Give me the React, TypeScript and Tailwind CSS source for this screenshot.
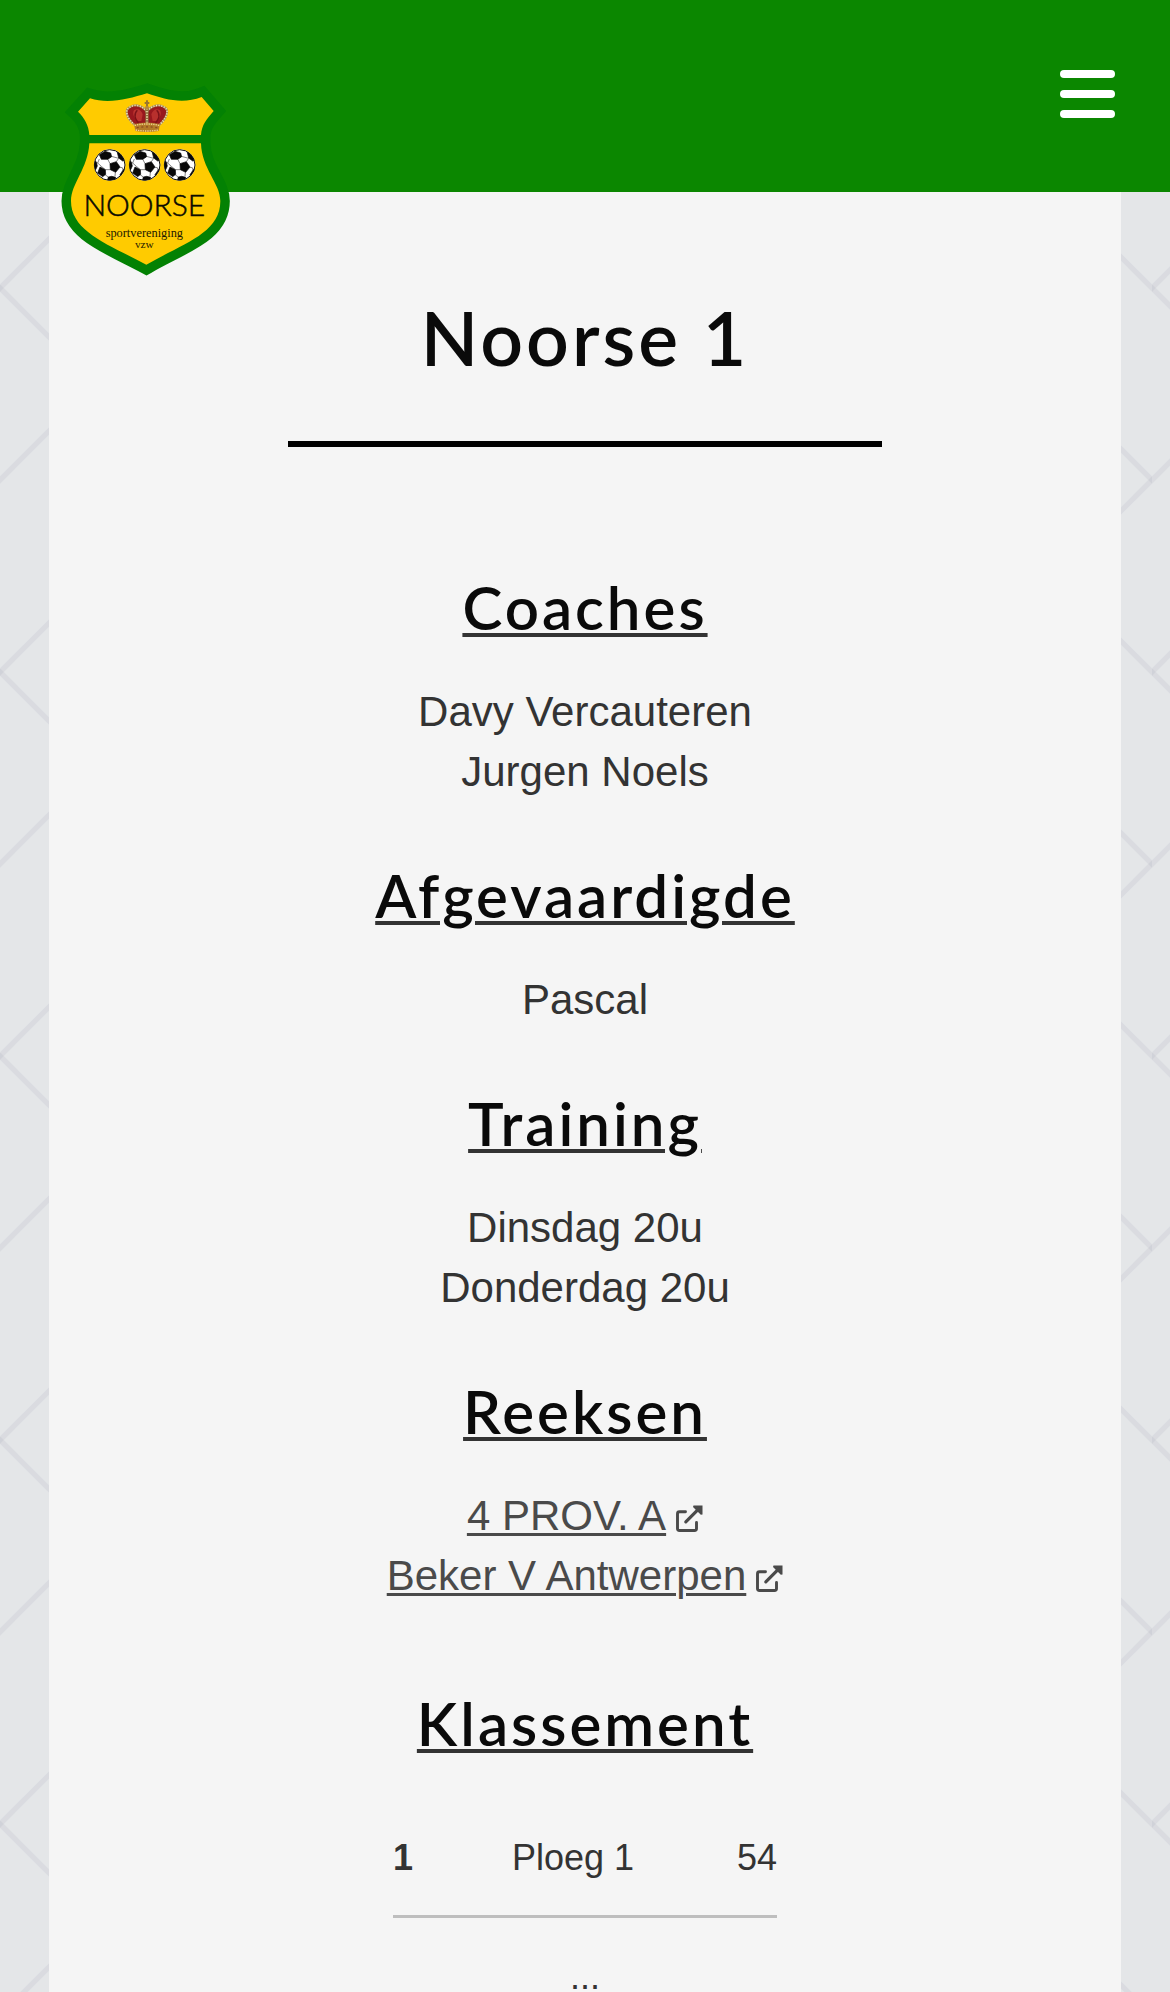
import type { ReactNode } from "react";

function Backdrop() {
  return (
    <svg className="absolute inset-0 -z-10 h-full w-full" aria-hidden="true">
      <defs>
        <pattern id="weave" width="384" height="384" patternUnits="userSpaceOnUse">
          <g stroke="#a5a7b4" strokeOpacity="0.17" strokeWidth="5.2" fill="none">
            <path d="M-20 116L96 0" />
            <path d="M288 192L404 76" />
            <path d="M288 0L404 116" />
            <path d="M-20 308L96 192" />
            <path d="M-20 268L96 384" />
            <path d="M288 192L404 308" />
          </g>
        </pattern>
      </defs>
      <rect width="100%" height="100%" fill="#e4e6e8" />
      <rect width="100%" height="100%" fill="url(#weave)" />
    </svg>
  );
}

function Ball({ x }: { x: number }) {
  return (
    <g transform={`translate(${x} 270)`}>
      <circle r="47" fill="#fff" />
      <g clipPath="url(#ballClip)">
        <path
          d="M1 -4L-6 -18M20 -10L27 -20M30 7L38 8M17 22L16 34M2 14L-13 14M-6 -18L5 -26M5 -26L27 -20M-31 -18L-36 -6M-36 -6L-25 4M-36 -6L-47 -2M-13 14L-25 4M-14 29L-4 36M38 8L41 18"
          fill="none"
          stroke="#444"
          strokeWidth="2"
        />
        <g fill="#080808" stroke="#080808" strokeWidth="2" strokeLinejoin="round">
          <path d="M1 -4L20 -10L31 6L18 22L2 14Z" />
          <path d="M-31 -31L-14 -41L3 -36L6 -25L-6 -17L-25 -17Z" />
          <path d="M22 -41L27 -21L39 -12L47 -15L38 -36Z" />
          <path d="M-47 -16L-40 -9L-37 3L-42 14L-50 10Z" />
          <path d="M-29 6L-13 14L-12 28L-21 35L-36 24Z" />
          <path d="M-4 36L6 34L18 37L16 48L-7 48Z" />
          <path d="M39 17L47 8L46 24L33 36L31 29Z" />
        </g>
      </g>
      <circle r="46" fill="none" stroke="#111" strokeWidth="3" />
    </g>
  );
}

function Crown() {
  return (
    <g>
      <path d="M254 150C232 130 222 104 240 96C256 86 280 92 288 106H294C304 92 328 86 344 96C360 104 350 130 328 150Z" fill="#98181e" />
      <path d="M252 106C262 98 274 104 278 118L274 138L264 138C252 130 246 116 252 106Z" fill="#bb3430" />
      <path d="M330 106C320 98 308 104 304 118L308 138L318 138C330 130 336 116 330 106Z" fill="#b8302d" />
      <path d="M268 148C254 130 250 118 262 106M314 148C328 130 332 118 320 106" fill="none" stroke="#7c1218" strokeWidth="4" />
      <path d="M254 150C230 130 222 104 240 96C256 86 282 92 290 112C300 92 326 86 342 96C360 104 350 130 328 150" fill="none" stroke="#a98a55" strokeWidth="6" />
      <path d="M254 150C230 130 222 104 240 96C256 86 282 92 290 112C300 92 326 86 342 96C360 104 350 130 328 150" fill="none" stroke="#f1e4c4" strokeWidth="5" strokeDasharray="3 5" />
      <path d="M291 98V148" stroke="#8c6a3a" strokeWidth="10" />
      <path d="M291 100V148" stroke="#ecd9a8" strokeWidth="5" strokeDasharray="4 4" />
      <path d="M291 76V98M284 84H298" stroke="#9a7630" strokeWidth="6" />
      <circle cx="291" cy="98" r="6" fill="#b5873c" />
      <path d="M252 147Q291 138 330 147L326 168Q291 174 256 168Z" fill="#b37b28" />
      <path d="M254 151Q291 143 328 151M257 165Q291 171 325 165" fill="none" stroke="#f0d691" strokeWidth="4" strokeDasharray="4 3" />
      <path d="M260 158Q291 153 322 158" fill="none" stroke="#8a4a20" strokeWidth="4" strokeDasharray="6 8" />
    </g>
  );
}

const SHIELD =
  "M120 70C175 88 235 72 291 55C345 74 400 88 455 66L491 108C470 132 455 150 453 180V205C455 282 511 325 511 378C511 475 400 505 289 569C175 508 63 470 63 378C63 325 114 282 118 205V180C116 150 103 128 84 110Z";

function Logo() {
  return (
    <svg viewBox="0 0 570 630" className="h-[210px] w-[190px]" role="img" aria-label="Noorse sportvereniging vzw">
      <defs>
        <clipPath id="ballClip">
          <circle r="46" />
        </clipPath>
      </defs>
      <path d={SHIELD} fill="#ffcb00" stroke="#038103" strokeWidth="57" />
      <path d={SHIELD} fill="#ffcb00" />
      <path d="M105 180H466V205H105Z" fill="#038103" />
      <Crown />
      <Ball x={179} />
      <Ball x={284} />
      <Ball x={389} />
      <text
        x="283"
        y="424"
        textAnchor="middle"
        fontSize="90"
        fill="#0a0a00"
        stroke="#0a0a00"
        strokeWidth="1.500"
        className="font-[Lato,sans-serif] font-light"
      >
        NOORSE
      </text>
      <g textAnchor="middle" fill="#1c1800" className="font-['Liberation_Serif',serif]">
        <text x="283" y="487" fontSize="37">
          sportvereniging
        </text>
        <text x="283" y="519" fontSize="34">
          vzw
        </text>
      </g>
    </svg>
  );
}

function ExternalIcon() {
  return (
    <svg viewBox="0 0 27 27" className="ml-[10px] inline-block size-[27px] align-[-2px]" fill="none" aria-hidden="true">
      <path
        d="M9.500 6.800H3.500Q1.500 6.800 1.500 8.800V23.500Q1.500 25.500 3.500 25.500H18.500Q20.500 25.500 20.500 23.500V17.500"
        stroke="currentColor"
        strokeWidth="2.900"
        strokeLinecap="round"
      />
      <path d="M9.800 16.800L22 4.600" stroke="currentColor" strokeWidth="3.200" strokeLinecap="round" />
      <path d="M17.500 0.500H26.500V9.500L24.800 9.800L17 2Z" fill="currentColor" />
    </svg>
  );
}

function Heading({ children }: { children: ReactNode }) {
  return (
    <h2 className="mb-[33px] font-[Lato,sans-serif] text-6xl leading-[84px] font-semibold tracking-wider text-[#0a0a0a] underline decoration-[#333] decoration-4 underline-offset-3">
      {children}
    </h2>
  );
}

function Section({ title, lines }: { title: string; lines: string[] }) {
  return (
    <section className="mb-[51px]">
      <Heading>{title}</Heading>
      {lines.map((line) => (
        <p key={line}>{line}</p>
      ))}
    </section>
  );
}

function SeriesLink({ children }: { children: ReactNode }) {
  return (
    <li>
      <a href="#" className="text-[#4a4a4a]">
        <span className="underline decoration-3 underline-offset-3">{children}</span>
        <ExternalIcon />
      </a>
    </li>
  );
}

export default function App() {
  return (
    <div className="relative isolate flex min-h-screen flex-col font-['Liberation_Sans',sans-serif] text-[#333]">
      <Backdrop />
      <header className="relative flex h-48 items-start justify-end bg-[#0b8700] px-[55px] pt-[66px]">
        <a href="#" className="absolute top-[75px] left-[50px]">
          <Logo />
        </a>
        <button type="button" aria-label="Menu" className="flex w-[55px] flex-col gap-3 pt-1">
          <span className="h-2 w-full rounded-full bg-white" />
          <span className="h-2 w-full rounded-full bg-white" />
          <span className="h-2 w-full rounded-full bg-white" />
        </button>
      </header>

      <main className="mx-[49px] flex-1 bg-[#f5f5f5] pt-[93px] text-center text-[42px] leading-[60px]">
        <h1 className="font-[Lato,sans-serif] text-[75px] leading-[105px] font-semibold tracking-[3px] text-[#0a0a0a]">
          Noorse 1
        </h1>
        <hr className="mx-auto mt-[51px] mb-[118px] w-[594px] border-t-6 border-black" />

        <Section title="Coaches" lines={["Davy Vercauteren", "Jurgen Noels"]} />
        <Section title="Afgevaardigde" lines={["Pascal"]} />
        <Section title="Training" lines={["Dinsdag 20u", "Donderdag 20u"]} />

        <section className="mb-[75px]">
          <Heading>Reeksen</Heading>
          <ul>
            <SeriesLink>4 PROV. A</SeriesLink>
            <SeriesLink>Beker V Antwerpen</SeriesLink>
          </ul>
        </section>

        <section>
          <Heading>Klassement</Heading>
          <table className="mx-auto mt-9 w-96 table-fixed text-4xl leading-[54px]">
            <tbody>
              <tr className="border-b-3 border-[#bebebe]">
                <th scope="row" className="w-[60px] py-[30px] text-left font-bold">
                  1
                </th>
                <td className="w-60 py-[30px]">Ploeg 1</td>
                <td className="py-[30px] text-right">54</td>
              </tr>
              <tr>
                <td colSpan={3} className="pt-[43px] leading-8">
                  ...
                </td>
              </tr>
            </tbody>
          </table>
        </section>
      </main>
    </div>
  );
}
